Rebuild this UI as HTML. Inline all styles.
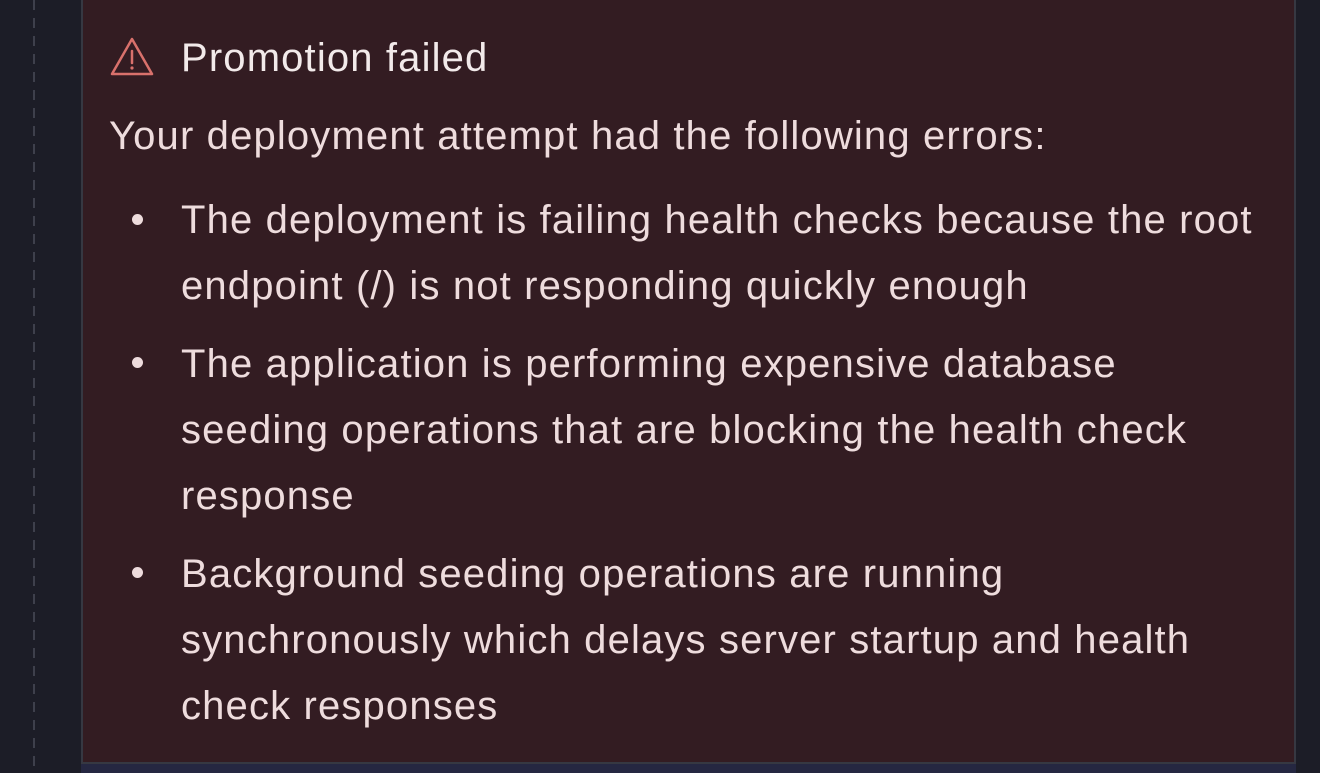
<!DOCTYPE html>
<html><head><style>
html,body{margin:0;padding:0;}
body{width:1320px;height:773px;background:#1c1d27;position:relative;overflow:hidden;font-family:"Liberation Sans",sans-serif;color:#eedcdd;}
.dash{position:absolute;left:33px;top:0;width:2px;height:773px;background:repeating-linear-gradient(#3e404c 0 10px,transparent 10px 18px);}
.card{position:absolute;left:81px;top:-10px;width:1211px;height:772px;background:#331c22;border:2px solid #363842;border-top:none;}
.below{position:absolute;left:81px;top:764px;width:1215px;height:9px;background:#252741;}
.t{position:absolute;white-space:nowrap;font-size:40px;letter-spacing:1.15px;line-height:46px;}
.b{position:absolute;width:11px;height:11px;border-radius:50%;background:#eedcdd;left:132px;}
</style></head><body>
<div class="dash"></div>
<div class="card"></div>
<div class="below"></div>
<svg style="position:absolute;left:109px;top:36px" width="46" height="42" viewBox="0 0 46 42"><path d="M23 3 L43 38 L3 38 Z" fill="none" stroke="#d9716c" stroke-width="2.5" stroke-linejoin="round"/><line x1="23" y1="15" x2="23" y2="27" stroke="#d9716c" stroke-width="2.5" stroke-linecap="round"/><circle cx="23" cy="32" r="1.6" fill="#d9716c"/></svg>
<div class="t" style="left:181px;top:35px;color:#f2eaea">Promotion failed</div>
<div class="t" style="left:109px;top:113px">Your deployment attempt had the following errors:</div>
<div class="b" style="top:214px"></div>
<div class="t" style="left:181px;top:197px">The deployment is failing health checks because the root</div>
<div class="t" style="left:181px;top:263px">endpoint (/) is not responding quickly enough</div>
<div class="b" style="top:357px"></div>
<div class="t" style="left:181px;top:341px">The application is performing expensive database</div>
<div class="t" style="left:181px;top:407px">seeding operations that are blocking the health check</div>
<div class="t" style="left:181px;top:473px">response</div>
<div class="b" style="top:567px"></div>
<div class="t" style="left:181px;top:551px">Background seeding operations are running</div>
<div class="t" style="left:181px;top:617px">synchronously which delays server startup and health</div>
<div class="t" style="left:181px;top:683px">check responses</div>
</body></html>
